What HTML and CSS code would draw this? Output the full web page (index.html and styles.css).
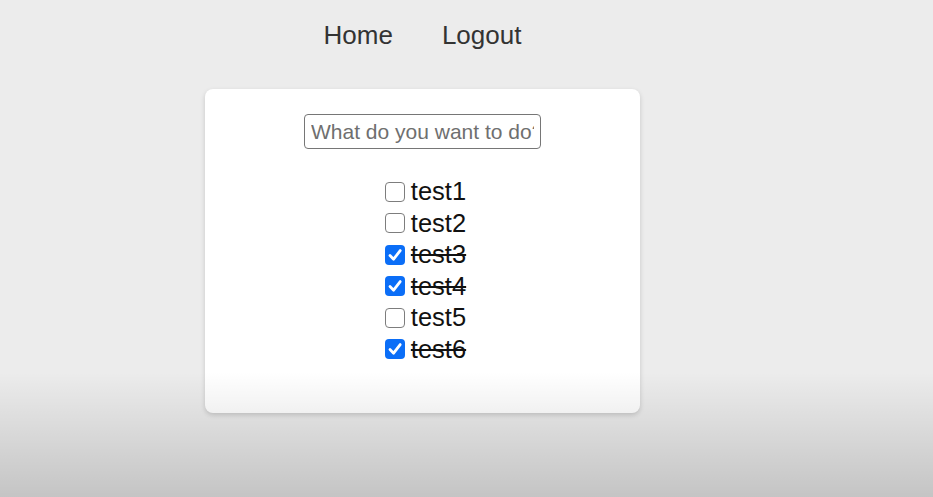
FILE: index.html
```html
<!DOCTYPE html>
<html lang="en">
<head>
<meta charset="utf-8">
<title>Todos</title>
<link rel="stylesheet" href="styles.css">
</head>
<body>
<div class="page">
  <nav class="nav">
    <a class="nav-link" href="#">Home</a>
    <a class="nav-link" href="#">Logout</a>
  </nav>
  <main class="card">
    <input class="todo-input" type="text" placeholder="What do you want to do?">
    <ul class="todo-list">
      <li class="todo"><span class="box"></span><span class="label">test1</span></li>
      <li class="todo"><span class="box"></span><span class="label">test2</span></li>
      <li class="todo done"><span class="box checked"><svg viewBox="0 0 20 20" width="20" height="20"><path d="M5 10.6 L8.6 14.2 L15.2 5.6" fill="none" stroke="#fff" stroke-width="2.8" stroke-linecap="round" stroke-linejoin="round"/></svg></span><span class="label">test3</span></li>
      <li class="todo done"><span class="box checked"><svg viewBox="0 0 20 20" width="20" height="20"><path d="M5 10.6 L8.6 14.2 L15.2 5.6" fill="none" stroke="#fff" stroke-width="2.8" stroke-linecap="round" stroke-linejoin="round"/></svg></span><span class="label">test4</span></li>
      <li class="todo"><span class="box"></span><span class="label">test5</span></li>
      <li class="todo done"><span class="box checked"><svg viewBox="0 0 20 20" width="20" height="20"><path d="M5 10.6 L8.6 14.2 L15.2 5.6" fill="none" stroke="#fff" stroke-width="2.8" stroke-linecap="round" stroke-linejoin="round"/></svg></span><span class="label">test6</span></li>
    </ul>
  </main>
</div>
<div class="shade"></div>
</body>
</html>
```
FILE: styles.css
```css
html, body {
  margin: 0;
  padding: 0;
}
body {
  background: #ececec;
  font-family: "Liberation Sans", Arial, Helvetica, sans-serif;
  width: 933px;
  height: 497px;
  overflow: hidden;
  position: relative;
}
.page {
  width: 845px;
  display: flex;
  flex-direction: column;
  align-items: center;
}
.nav {
  height: 70px;
  display: flex;
  align-items: center;
  justify-content: center;
  gap: 49px;
}
.nav-link {
  font-size: 26px;
  color: #333;
  text-decoration: none;
}
.card {
  margin-top: 19px;
  width: 435px;
  box-sizing: border-box;
  padding: 25px 0 48px;
  background: #fff;
  border-radius: 8px;
  box-shadow: 0 2px 5px rgba(0, 0, 0, 0.16);
  display: flex;
  flex-direction: column;
  align-items: center;
}
.todo-input {
  width: 237px;
  height: 35px;
  box-sizing: border-box;
  border: 1px solid #767676;
  border-radius: 4px;
  padding: 0 6px;
  font-family: "Liberation Sans", Arial, sans-serif;
  font-size: 21px;
  color: #222;
  background: #fff;
  outline: none;
}
.todo-input::placeholder {
  color: #6f6f6f;
}
.todo-list {
  list-style: none;
  margin: 27px 0 0;
  padding: 0 0 0 6px;
  display: flex;
  flex-direction: column;
  align-items: center;
}
.todo {
  height: 31.5px;
  display: flex;
  align-items: center;
  justify-content: center;
  font-size: 25.5px;
  color: #111;
}
.box {
  width: 20px;
  height: 20px;
  box-sizing: border-box;
  border: 1.6px solid #7d7d7d;
  border-radius: 4px;
  margin-right: 6px;
  background: #fff;
  display: block;
}
.box.checked {
  border: none;
  background: #0b6ef7;
}
.box svg {
  display: block;
}
.done .label {
  text-decoration: line-through;
  text-decoration-thickness: 2px;
}
.shade {
  position: absolute;
  left: 0;
  right: 0;
  top: 372px;
  bottom: 0;
  background: linear-gradient(to bottom, rgba(0, 0, 0, 0), rgba(0, 0, 0, 0.17));
  pointer-events: none;
}
```
